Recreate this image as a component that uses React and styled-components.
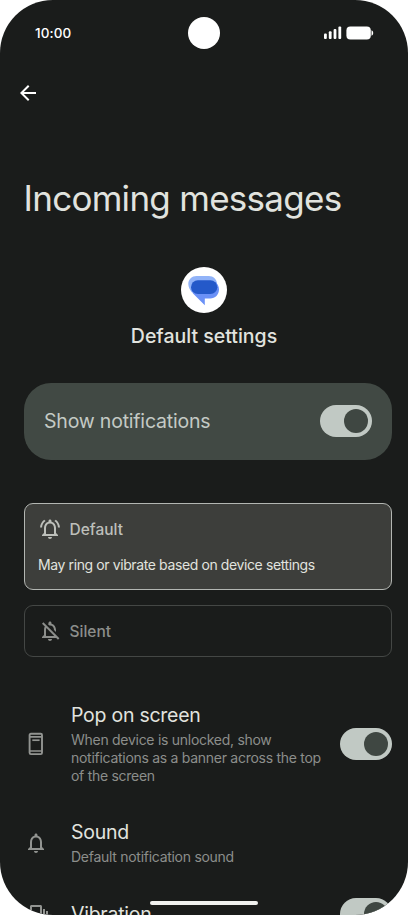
import React from 'react'
import styled, { createGlobalStyle } from 'styled-components'
import {
  MdArrowBack,
  MdOutlineNotifications,
  MdOutlineNotificationsActive,
  MdOutlineNotificationsOff,
  MdVibration,
} from 'react-icons/md'

const GlobalStyle = createGlobalStyle`
  * {
    box-sizing: border-box;
  }
  body {
    margin: 0;
    background: #fff;
    overflow: hidden;
    font-family: Inter, Roboto, sans-serif;
  }
`

const SignalIcon = () => (
  <svg width="18" height="14" viewBox="0 0 18 14" fill="#fff">
    <rect x="0" y="7.5" width="2.8" height="5.5" rx="1" />
    <rect x="4.8" y="5.3" width="2.8" height="7.7" rx="1" />
    <rect x="9.6" y="2.9" width="2.8" height="10.1" rx="1" />
    <rect x="14.4" y="0.6" width="2.8" height="12.4" rx="1" />
  </svg>
)

const BatteryIcon = () => (
  <svg width="28" height="14" viewBox="0 0 28 14" fill="#fff">
    <rect x="0.4" y="0.4" width="24.4" height="13.2" rx="4" />
    <path d="M25.5 4.2c1.1.4 1.7 1.5 1.7 2.8s-.6 2.4-1.7 2.8z" />
  </svg>
)

const MessagesLogo = () => (
  <svg width="46" height="46" viewBox="0 0 46 46">
    <circle cx="23" cy="23" r="23" fill="#fff" />
    <path d="M15.5 9h12.300c4.500 0 8.200 3.500 8.200 8v4H17l-6 4.500C9 23 7.300 20 7.300 17 7.300 12.500 11 9 15.500 9z" fill="#91b3f8" />
    <path d="M17 20L34 14.800c2.500 1.700 4 4.500 4 7.700 0 5-3.800 9-8.800 9h-5.400v6.700L12 26.500l-1.500-3z" fill="#6b91f7" />
    <rect x="10" y="13.300" width="26.300" height="13.800" rx="6.900" fill="#2459c9" />
  </svg>
)

const BannerIcon = () => (
  <svg width="24" height="24" viewBox="0 0 24 24" fill="none" stroke="currentColor">
    <rect x="5.6" y="1.700" width="12.400" height="20.400" rx="1.300" strokeWidth="1.900" />
    <path d="M6 4.900h12M6 19h12" strokeWidth="1.700" />
    <path d="M8.300 8.200h7.300" strokeWidth="1.700" />
  </svg>
)

const Toggle = () => (
  <Track role="switch" aria-checked="true">
    <Knob />
  </Track>
)

const SettingRow = ({ icon, title, toggle, children }) => (
  <Row>
    <RowIcon>{icon}</RowIcon>
    <RowText>
      <RowTitle>{title}</RowTitle>
      {children}
    </RowText>
    {toggle && <Toggle />}
  </Row>
)

const App = () => {
  return (
    <Screen>
      <GlobalStyle />
      <StatusBar>
        <Time>10:00</Time>
        <Camera />
        <StatusIcons>
          <SignalIcon />
          <BatteryIcon />
        </StatusIcons>
      </StatusBar>
      <BackButton aria-label="Back">
        <MdArrowBack />
      </BackButton>
      <Title>Incoming messages</Title>
      <AppInfo>
        <MessagesLogo />
        <AppLabel>Default settings</AppLabel>
      </AppInfo>
      <ShowCard>
        <ShowLabel>Show notifications</ShowLabel>
        <Toggle />
      </ShowCard>
      <Options>
        <Option $active>
          <OptionHead>
            <MdOutlineNotificationsActive />
            <span>Default</span>
          </OptionHead>
          <OptionText>May ring or vibrate based on device settings</OptionText>
        </Option>
        <Option>
          <OptionHead>
            <MdOutlineNotificationsOff />
            <span>Silent</span>
          </OptionHead>
        </Option>
      </Options>
      <Rows>
        <SettingRow icon={<BannerIcon />} title="Pop on screen" toggle>
          <RowSub>
            When device is unlocked, show<br />
            notifications as a banner across the top<br />
            of the screen
          </RowSub>
        </SettingRow>
        <SettingRow icon={<MdOutlineNotifications />} title="Sound">
          <RowSub>Default notification sound</RowSub>
        </SettingRow>
        <SettingRow icon={<MdVibration />} title="Vibration" toggle />
      </Rows>
      <HomeBar />
    </Screen>
  )
}

export default App

const Screen = styled.div`
  position: relative;
  display: flex;
  flex-direction: column;
  width: 408px;
  height: 915px;
  overflow: hidden;
  border-radius: 53px;
  background: #1a1c1b;
  color: #e1e3df;
`

const StatusBar = styled.div`
  display: grid;
  grid-template-columns: 1fr 32px 1fr;
  align-items: center;
  flex: none;
  height: 66px;
  padding: 0 35px 0 35px;
`

const Time = styled.span`
  font-size: 13.5px;
  font-weight: 500;
  letter-spacing: 0.1px;
  color: #fff;
`

const Camera = styled.span`
  width: 32px;
  height: 32px;
  border-radius: 50%;
  background: #fff;
`

const StatusIcons = styled.div`
  display: flex;
  justify-content: flex-end;
  gap: 4px;
  margin-right: -1px;
`

const BackButton = styled.button`
  display: flex;
  flex: none;
  width: 24px;
  height: 24px;
  margin: 15px 0 0 16px;
  padding: 0;
  border: none;
  background: none;
  color: #fff;
  font-size: 24px;
`

const Title = styled.h1`
  flex: none;
  height: 44px;
  margin: 71px 0 0 23.5px;
  font-size: 35px;
  font-weight: 400;
  line-height: 44px;
  letter-spacing: -0.72px;
  white-space: nowrap;
`

const AppInfo = styled.div`
  display: flex;
  flex-direction: column;
  align-items: center;
  flex: none;
  height: 82px;
  margin-top: 47px;
  gap: 11px;

  svg {
    flex: none;
  }
`

const AppLabel = styled.div`
  font-size: 19.5px;
  font-weight: 500;
  line-height: 24px;
`

const ShowCard = styled.div`
  display: flex;
  align-items: center;
  justify-content: space-between;
  flex: none;
  height: 77px;
  margin: 34px 16px 0 24px;
  padding: 0 20px 1px;
  border-radius: 27px;
  background: #414944;
  color: #c4cac5;
`

const ShowLabel = styled.span`
  font-size: 19.5px;
  letter-spacing: -0.2px;
`

const Track = styled.span`
  display: flex;
  align-items: center;
  justify-content: flex-end;
  flex: none;
  width: 52px;
  height: 32px;
  padding: 4px;
  border-radius: 16px;
  background: #c1c9c4;
`

const Knob = styled.span`
  width: 24px;
  height: 24px;
  border-radius: 50%;
  background: #3f4742;
`

const Options = styled.div`
  display: flex;
  flex-direction: column;
  flex: none;
  gap: 15px;
  margin: 43px 16px 0 24px;
`

const Option = styled.div`
  height: ${({ $active }) => ($active ? '87px' : '52px')};
  padding: 13px 13px 0;
  border: 1px solid ${({ $active }) => ($active ? '#b3b6b2' : '#444745')};
  border-radius: 9px;
  background: ${({ $active }) => ($active ? '#3d3e3b' : 'transparent')};
  color: ${({ $active }) => ($active ? '#bdbfba' : '#8c8e8b')};
`

const OptionHead = styled.div`
  display: flex;
  align-items: center;
  gap: 8px;
  height: 24px;
  font-size: 15.5px;
  font-weight: 500;

  svg {
    width: 24px;
    height: 24px;
    margin-left: -0.5px;
  }
`

const OptionText = styled.p`
  margin: 14px 0 0;
  font-size: 14px;
  line-height: 20px;
  letter-spacing: -0.39px;
  color: #e1e3df;
  white-space: nowrap;
`

const Rows = styled.div`
  display: flex;
  flex-direction: column;
  flex: none;
  gap: 33px;
  margin: 45px 16px 0 24px;
`

const Row = styled.div`
  display: flex;
  align-items: center;

  &:nth-child(2) {
    margin-top: 1px;
  }

  &:last-child {
    margin-top: -1px;
  }
`

const RowIcon = styled.span`
  display: flex;
  flex: none;
  width: 47px;
  color: #929491;

  svg {
    width: 24px;
    height: 24px;
  }
`

const RowText = styled.div`
  flex: 1;
`

const RowTitle = styled.div`
  font-size: 19.5px;
  line-height: 26px;
  letter-spacing: -0.25px;
  white-space: nowrap;
`

const RowSub = styled.div`
  margin-top: 3px;
  font-size: 14px;
  line-height: 18px;
  letter-spacing: -0.28px;
  color: #8c8e8b;
  white-space: nowrap;
`

const HomeBar = styled.div`
  position: absolute;
  left: 150px;
  bottom: 10px;
  width: 108px;
  height: 4px;
  border-radius: 2px;
  background: #f0f1ef;
`
